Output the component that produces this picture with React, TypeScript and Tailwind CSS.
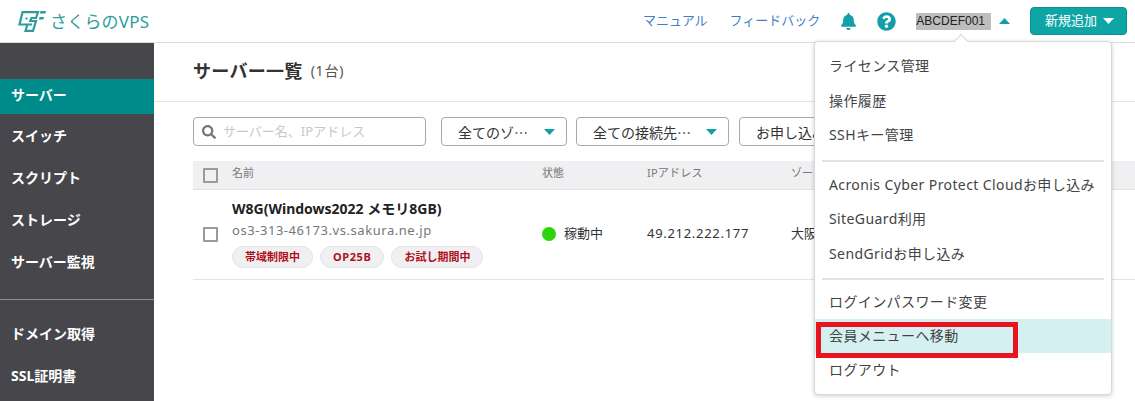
import { FaBell, FaQuestionCircle, FaSearch } from "react-icons/fa";

const sans = `font-["Noto_Sans","Noto_Sans_CJK_JP",sans-serif]`;

function Caret({ up, className }: { up?: boolean; className: string }) {
  return (
    <svg width="11" height="6" viewBox="0 0 11 6" className={className}>
      <path d={up ? "M5.5 0 11 6H0z" : "M0 0h11L5.5 6z"} fill="currentColor" />
    </svg>
  );
}

function Logo() {
  return (
    <svg width="30" height="21" viewBox="0 0 30 21" className="text-[#2f9c9c]">
      <path d="M4.500 1.200H20L18 7h-4.500l-1.200 3H18l-3 9.800H7.500l1.800-6.300H1.500z" fill="none" stroke="currentColor" strokeWidth="2.200" />
      <path d="M9.500 7.500h-2M10 13.500h4" stroke="currentColor" strokeWidth="2" />
      <path d="M22.500 0H28l-.6 2.600h-5.500zM21.500 6h4.500l-.6 2.600h-4.500z" fill="currentColor" />
    </svg>
  );
}

function Filter({ label, width }: { label: string; width: string }) {
  return (
    <div className={`flex h-[29px] shrink-0 items-center justify-between rounded border border-[#a8a8a8] pl-4 pr-[11px] font-["Noto_Sans_CJK_JP",sans-serif] text-sm text-[#333] ${width}`}>
      <span>{label}</span>
      <Caret className="text-[#12a0a8]" />
    </div>
  );
}

function Tag({ label, wide }: { label: string; wide?: boolean }) {
  return (
    <span className={`flex h-[22px] items-center rounded-full border border-[#e4e4e6] bg-[#f0f0f2] px-3 text-[11px] font-bold text-[#b0101c] ${wide ? "tracking-[0.6px]" : ""}`}>
      {label}
    </span>
  );
}

const sideTop = ["スイッチ", "スクリプト", "ストレージ", "サーバー監視"];
const menuGroups = [
  ["ライセンス管理", "操作履歴", "SSHキー管理"],
  ["Acronis Cyber Protect Cloudお申し込み", "SiteGuard利用", "SendGridお申し込み"],
];

export default function App() {
  return (
    <div className={`relative h-[401px] w-[1135px] overflow-hidden bg-white ${sans}`}>
      <header className="flex h-[43px] items-center border-b border-[#dcdcdc] pr-2">
        <div className="ml-[18px] flex items-center gap-[2px]">
          <Logo />
          <span className="text-[17px] leading-none tracking-[0.2px] text-[#2f9c9c]">さくらのVPS</span>
        </div>
        <nav className="ml-auto flex items-center text-[13px] text-[#3f7fc4]">
          <span>マニュアル</span>
          <span className="ml-[22px]">フィードバック</span>
          <FaBell size={17} className="ml-[20px] text-[#12a0a8]" />
          <FaQuestionCircle size={19} className="ml-[20px] text-[#12a0a8]" />
          <span className="ml-[20px] bg-[#bdbdbd] pr-[6px] font-['Liberation_Sans'] text-xs leading-[17px] text-[#222]">ABCDEF001</span>
          <Caret up className="ml-2 text-[#12a0a8]" />
        </nav>
        <button className="ml-[20px] flex h-[28px] w-[97px] items-center gap-[6px] rounded border border-[#0e8f96] bg-[#0ea5a5] pl-[14px] text-[13px] text-white">
          新規追加
          <Caret className="text-white" />
        </button>
      </header>

      <div className="flex h-[358px]">
        <aside className="w-[154px] shrink-0 bg-[#47464b] pt-9 text-sm font-bold text-white">
          <div className="flex h-[35px] items-center bg-[#008b8b] pb-[3px] pl-[11px]">サーバー</div>
          <div className="flex flex-col">
            {sideTop.map((item) => (
              <div key={item} className="flex h-[42px] items-center pl-[11px] pt-[2px]">{item}</div>
            ))}
          </div>
          <div className="mt-[17px] border-t border-[#8f8f92]" />
          <div className="mt-[13px] flex flex-col">
            <div className="flex h-[42px] items-center pl-[11px]">ドメイン取得</div>
            <div className="flex h-[42px] items-center pl-[11px]">SSL証明書</div>
          </div>
        </aside>

        <main className="min-w-0 flex-1">
          <div className="flex h-[59px] items-center border-b border-[#e4e4e4] pb-[2px] pl-[39px]">
            <h1 className="text-[18px] font-bold tracking-[0.3px] text-[#333]">サーバー一覧</h1>
            <span className="ml-2 text-sm tracking-[0.8px] text-[#555]">(1台)</span>
          </div>

          <div className="mt-[15px] flex gap-[15px] pl-[39px]">
            <div className="flex h-[29px] w-[233px] shrink-0 items-center gap-[7px] rounded border border-[#a8a8a8] pl-2 text-[13px] text-[#c8c8c8]">
              <FaSearch size={14} className="text-[#777]" />
              サーバー名、IPアドレス
            </div>
            <Filter label="全てのゾ…" width="w-[126px]" />
            <Filter label="全ての接続先…" width="w-[153px] -ml-[6px]" />
            <Filter label="お申し込み" width="w-[140px] -ml-[5px]" />
          </div>

          <div className="ml-[39px] mt-[15px]">
            <div className="flex h-[29px] items-center border-b border-[#e2e2e2] bg-[#f0f0f2] pb-[3px] text-[11px] text-[#777]">
              <span className="ml-[10px] mt-[3px] h-[15px] w-[15px] rounded-[1px] border-2 border-[#9a9a9a]" />
              <span className="ml-[14px] w-[310px]">名前</span>
              <span className="w-[105px]">状態</span>
              <span className="w-[144px] tracking-[0.2px]">IPアドレス</span>
              <span>ゾーン</span>
            </div>
            <div className="flex h-[90px] items-center border-b border-[#e4e4e4]">
              <span className="ml-[10px] h-[15px] w-[15px] rounded-[1px] border-2 border-[#9a9a9a]" />
              <div className="ml-[14px] w-[310px] pb-[2px]">
                <div className="text-sm font-bold leading-5 text-[#222]">W8G(Windows2022 メモリ8GB)</div>
                <div className="mt-[2px] text-[13px] leading-[18px] tracking-[0.55px] text-[#777]">os3-313-46173.vs.sakura.ne.jp</div>
                <div className="mt-[7px] flex gap-[7px]">
                  <Tag label="帯域制限中" />
                  <Tag label="OP25B" wide />
                  <Tag label="お試し期間中" />
                </div>
              </div>
              <div className="flex w-[105px] items-center gap-2 pb-[2px] text-[13px] text-[#333]">
                <span className="h-[14px] w-[14px] rounded-full bg-[#2ed30a]" />
                稼動中
              </div>
              <span className="w-[144px] pb-[2px] text-[13px] tracking-[0.7px] text-[#333]">49.212.222.177</span>
              <span className="pb-[2px] text-[13px] text-[#333]">大阪第1</span>
            </div>
          </div>
        </main>
      </div>

      {/* ユーザーメニュー */}
      <div className="absolute left-[814px] top-[41px] w-[298px] rounded border border-[#d8d8d8] bg-white pb-[8px] pt-[7px] text-sm tracking-[0.4px] text-[#444] shadow-[0_1px_4px_rgba(0,0,0,0.2)]">
        <div className="absolute -top-[6px] left-[141px] h-[10px] w-[10px] rotate-45 border-l border-t border-[#d8d8d8] bg-white" />
        {menuGroups.map((group) => (
          <div key={group[0]}>
            {group.map((item) => (
              <div key={item} className="flex h-[34.500px] items-center pl-[14px]">{item}</div>
            ))}
            <div className="mx-[7px] mt-[7px] border-t-2 border-[#e2e2e2]" />
            <div className="h-[6px]" />
          </div>
        ))}
        <div className="flex h-[33px] items-center pb-[2px] pl-[14px]">ログインパスワード変更</div>
        <div className="flex h-[34px] items-center bg-[#d5f0f0] pl-[14px]">会員メニューへ移動</div>
        <div className="flex h-[33px] items-center pl-[14px]">ログアウト</div>
      </div>

      {/* 注釈の赤枠 */}
      <div className="absolute left-[816px] top-[322px] h-[36px] w-[202px] border-[5px] border-[#e8141f]" />
    </div>
  );
}
